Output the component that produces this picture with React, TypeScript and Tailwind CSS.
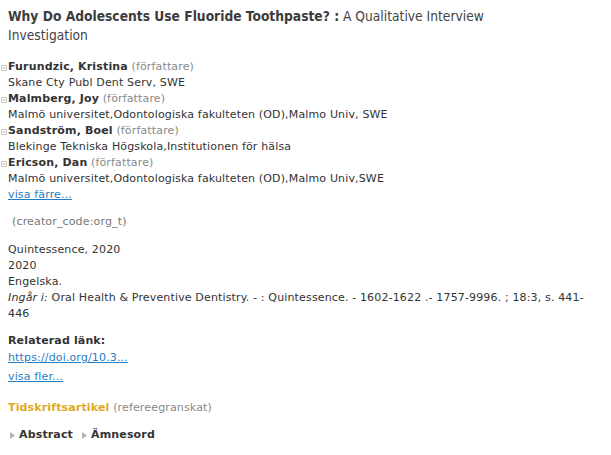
import React from "react";

const Box = () => (
  <svg width="6" height="6" viewBox="0 0 6 6" className="absolute left-[1px] top-[6px]">
    <rect x="0.5" y="0.5" width="5" height="5" fill="none" stroke="#cccccc" strokeWidth="1" />
    <line x1="1.5" y1="3" x2="4.5" y2="3" stroke="#b8b8b8" strokeWidth="1" />
  </svg>
);

const Tri = () => (
  <svg width="5" height="7" viewBox="0 0 5 7" className="inline-block mr-[4px]">
    <polygon points="0,0 5,3.5 0,7" fill="#b4b4b4" />
  </svg>
);

const authors = [
  { name: "Furundzic, Kristina", aff: "Skane Cty Publ Dent Serv, SWE" },
  { name: "Malmberg, Joy", aff: "Malmö universitet,Odontologiska fakulteten (OD),Malmo Univ, SWE" },
  { name: "Sandström, Boel", aff: "Blekinge Tekniska Högskola,Institutionen för hälsa" },
  { name: "Ericson, Dan", aff: "Malmö universitet,Odontologiska fakulteten (OD),Malmo Univ,SWE" },
];

export default function App() {
  return (
    <div className="w-[611px] h-[455px] bg-white text-[#333333] font-['DejaVu_Sans',Verdana,sans-serif] text-[11px] tracking-[0.15px] leading-[16px] px-[8px] pt-[7px]">
      <h1 className="font-['DejaVu_Sans_Condensed','DejaVu_Sans',sans-serif] text-[13.7px] leading-[19px] tracking-normal text-[#3c3c3c]">
        <span className="font-bold">Why Do Adolescents Use Fluoride Toothpaste? :</span>{" "}
        <span className="text-[#444444]">A Qualitative Interview</span>
        <br />
        <span className="text-[#444444]">Investigation</span>
      </h1>
      <div className="mt-[14px]">
        {authors.map((a) => (
          <div key={a.name} className="relative">
            <div className="absolute -left-[8px] top-0">
              <Box />
            </div>
            <div>
              <span className="font-bold">{a.name}</span>{" "}
              <span className="text-[#888888]">(författare)</span>
            </div>
            <div>{a.aff}</div>
          </div>
        ))}
        <a className="text-[#1f7ec4] underline">visa färre...</a>
      </div>
      <div className="mt-[11px] pl-[4px] text-[#777777]">(creator_code:org_t)</div>
      <div className="mt-[12px]">
        <div>Quintessence, 2020</div>
        <div>2020</div>
        <div>Engelska.</div>
        <div>
          <i>Ingår i:</i> Oral Health &amp; Preventive Dentistry. - : Quintessence. - 1602-1622 .- 1757-9996. ; 18:3, s. 441-
          <br />
          446
        </div>
      </div>
      <div className="mt-[11px] font-bold">Relaterad länk:</div>
      <div className="mt-[1px]">
        <a className="text-[#1f7ec4] underline">https://doi.org/10.3...</a>
      </div>
      <div className="mt-[3px]">
        <a className="text-[#1f7ec4] underline">visa fler...</a>
      </div>
      <div className="mt-[15px]">
        <span className="font-bold text-[#deaa22]">Tidskriftsartikel</span>{" "}
        <span className="text-[#888888]">(refereegranskat)</span>
      </div>
      <div className="mt-[11px] pl-[2px] font-bold flex gap-[9px]">
        <span className="flex items-center"><Tri />Abstract</span>
        <span className="flex items-center"><Tri />Ämnesord</span>
      </div>
    </div>
  );
}
